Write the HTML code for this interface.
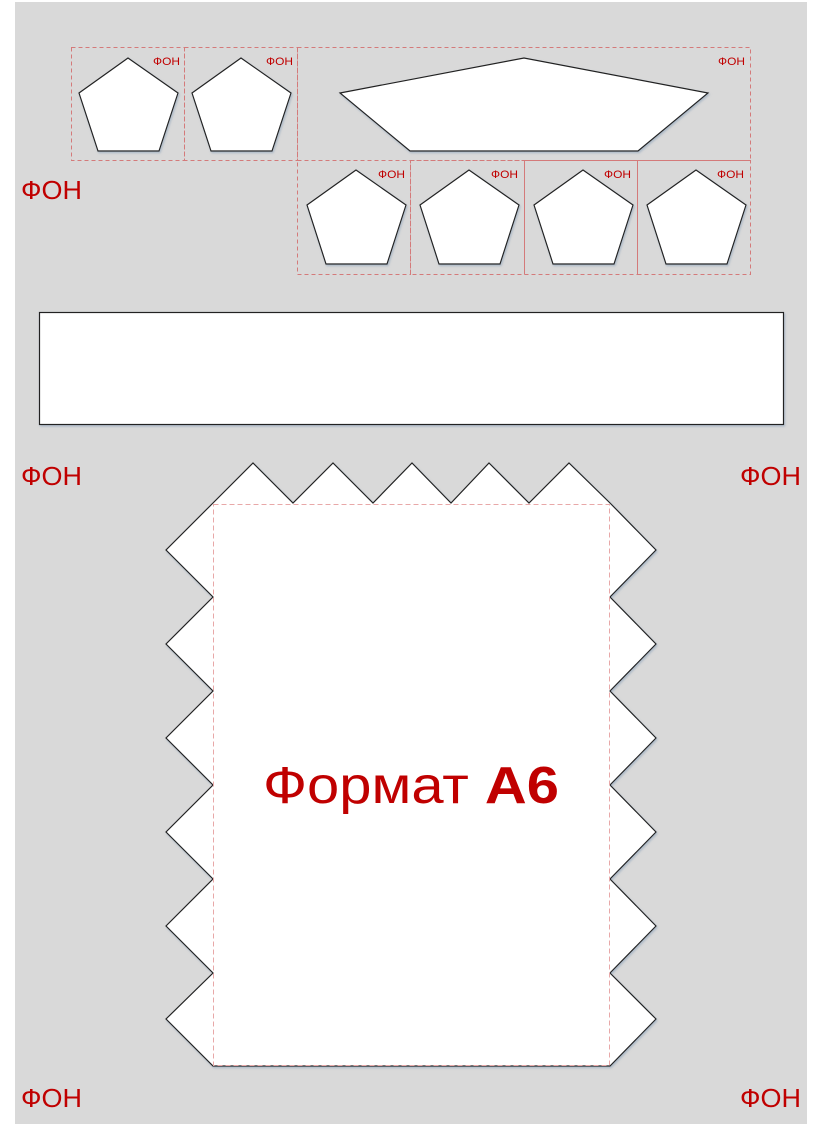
<!DOCTYPE html>
<html><head><meta charset="utf-8"><style>
html,body{margin:0;padding:0;background:#fff;width:823px;height:1140px;overflow:hidden}
svg{display:block}
</style></head><body>
<svg width="823" height="1140" viewBox="0 0 823 1140" xmlns="http://www.w3.org/2000/svg" font-family="Liberation Sans, DejaVu Sans, sans-serif">
<defs>
<filter id="sh" x="-5%" y="-5%" width="110%" height="110%"><feDropShadow dx="1" dy="1.5" stdDeviation="1" flood-color="#8aa0b8" flood-opacity="0.6"/></filter>
</defs>
<rect x="15" y="2" width="792" height="1122" fill="#d9d9d9"/>
<g fill="none" stroke="#d47a7a" stroke-width="1" stroke-dasharray="4,3">
<rect x="71.5" y="47.5" width="113" height="113"/>
<rect x="184.5" y="47.5" width="113" height="113"/>
<rect x="297.5" y="47.5" width="453" height="113"/>
<rect x="297.5" y="160.5" width="113" height="114"/>
<rect x="410.5" y="160.5" width="114" height="114"/>
<rect x="524.5" y="160.5" width="113" height="114"/>
<rect x="637.5" y="160.5" width="113" height="114"/>
</g>
<g fill="#fff" stroke="#222" stroke-width="1.2" filter="url(#sh)">
<polygon points="128,58 178,93 159,151 98,151 79,93"/>
<polygon points="241,58 291,93 272,151 211,151 192,93"/>
<polygon points="340,93 524,58 708,93 638,151 410,151"/>
<polygon points="356,170 406,205 387,264 326,264 307,205"/>
<polygon points="469,170 519,205 500,264 439,264 420,205"/>
<polygon points="583,170 633,205 614,264 553,264 534,205"/>
<polygon points="696,170 746,205 727,264 666,264 647,205"/>
<rect x="39.5" y="312.5" width="744" height="112"/>
<polygon points="213,503 253,463 293,503 333,463 373,503 412,463 451,503 489,463 529,503 569,463 610,503 656,550 610,597 656,644 610,691 656,738 610,785 656,832 610,879 656,926 610,973 656,1019 610,1066 213,1066 166,1019 213,973 166,926 213,879 166,832 213,785 166,738 213,691 166,644 213,597 166,550"/>
</g>
<rect x="213.5" y="504.5" width="396" height="561" fill="none" stroke="#e8a8a8" stroke-width="1" stroke-dasharray="5,3"/>
<g fill="#c00000" font-size="11">
<text x="153" y="65" textLength="27" lengthAdjust="spacingAndGlyphs">ФОН</text>
<text x="266" y="65" textLength="27" lengthAdjust="spacingAndGlyphs">ФОН</text>
<text x="718" y="65" textLength="27" lengthAdjust="spacingAndGlyphs">ФОН</text>
<text x="378" y="178" textLength="27" lengthAdjust="spacingAndGlyphs">ФОН</text>
<text x="491" y="178" textLength="27" lengthAdjust="spacingAndGlyphs">ФОН</text>
<text x="604" y="178" textLength="27" lengthAdjust="spacingAndGlyphs">ФОН</text>
<text x="717" y="178" textLength="27" lengthAdjust="spacingAndGlyphs">ФОН</text>
</g>
<g fill="#c00000" font-size="26">
<text x="21" y="199" textLength="61" lengthAdjust="spacingAndGlyphs">ФОН</text>
<text x="21" y="485" textLength="61" lengthAdjust="spacingAndGlyphs">ФОН</text>
<text x="740" y="485" textLength="61" lengthAdjust="spacingAndGlyphs">ФОН</text>
<text x="21" y="1107" textLength="61" lengthAdjust="spacingAndGlyphs">ФОН</text>
<text x="740" y="1107" textLength="61" lengthAdjust="spacingAndGlyphs">ФОН</text>
</g>
<text x="263" y="803" fill="#c00000" font-size="52" textLength="296" lengthAdjust="spacingAndGlyphs">Формат <tspan font-weight="bold">А6</tspan></text>
</svg>
</body></html>
